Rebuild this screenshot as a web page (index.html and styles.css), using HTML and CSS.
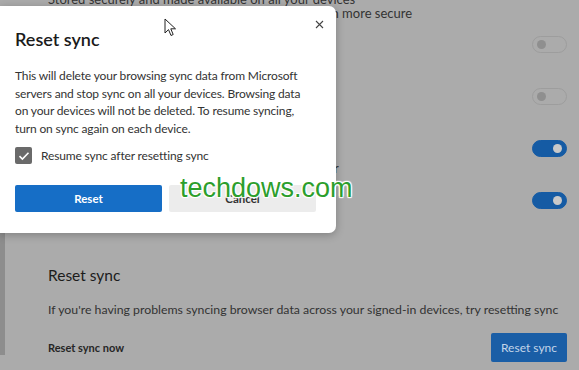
FILE: index.html
```html
<!DOCTYPE html>
<html lang="en">
<head>
    <meta charset="UTF-8">
    <meta name="viewport" content="width=device-width, initial-scale=1.0">
    <title>Reset sync</title>
    <link rel="stylesheet" href="styles.css">
</head>
<body>

<div class="settings">
    <div class="top-note">
        Stored securely and made available on all your devices<br>
        Sign in with your account to keep your history even more secure
    </div>

    <div class="toggle-row">
        <div class="row-text">Favorites</div>
        <span class="toggle"></span>
    </div>
    <div class="toggle-row">
        <div class="row-text">Settings</div>
        <span class="toggle"></span>
    </div>
    <div class="toggle-row">
        <div class="row-text shifted">Passwords
            <div class="row-sub">Sync passwords and card info saved in this browser</div>
        </div>
        <span class="toggle on"></span>
    </div>
    <div class="toggle-row">
        <div class="row-text">Open tabs</div>
        <span class="toggle on"></span>
    </div>

    <div class="card">
        <h2 class="card-title">Reset sync</h2>
        <p class="card-text">If you're having problems syncing browser data across your signed-in devices, try resetting sync</p>
        <div class="card-row">
            <span class="card-label">Reset sync now</span>
            <button class="outline-button">Reset sync</button>
        </div>
    </div>
</div>

<div class="dialog">
    <button class="close-button" aria-label="Close">
        <svg width="9" height="9" viewBox="0 0 9 9"><path d="M1 1L8 8M8 1L1 8" stroke="#444" stroke-width="1.1" fill="none"/></svg>
    </button>
    <h1 class="dialog-title">Reset sync</h1>
    <p class="dialog-text">This will delete your browsing sync data from Microsoft servers and stop sync on all your devices. Browsing data on your devices will not be deleted. To resume syncing, turn on sync again on each device.</p>
    <label class="check-row">
        <span class="checkbox">
            <svg width="12" height="10" viewBox="0 0 12 10"><path d="M1.5 5.2L4.4 8L10.5 1.8" stroke="#fff" stroke-width="1.6" fill="none"/></svg>
        </span>
        Resume sync after resetting sync
    </label>
    <div class="dialog-buttons">
        <button class="primary-button">Reset</button>
        <button class="secondary-button">Cancel</button>
    </div>
</div>

<svg class="cursor" width="13" height="19" viewBox="0 0 13 19">
    <path d="M1 1L1 15L4.5 11.6L7 17.5L9.2 16.5L6.8 10.8L11.5 10.8Z" fill="#fff" stroke="#222" stroke-width="1"/>
</svg>

<div class="watermark">techdows.com</div>

</body>
</html>
```

FILE: styles.css
```css
body {
    margin: 0;
    width: 579px;
    height: 370px;
    overflow: hidden;
    position: relative;
    background-color: #ababab;
    font-family: 'Lato', 'Noto Sans', sans-serif;
    color: #2a2a2a;
}
.settings {
    padding: 0 12px 0 0;
}
.top-note {
    margin-top: -8px;
    margin-bottom: -2px;
    padding-left: 48px;
    font-size: 13px;
    line-height: 14px;
    color: #333;
}
.toggle-row {
    height: 52px;
    display: flex;
    justify-content: space-between;
    align-items: center;
    padding-left: 48px;
    font-size: 13px;
    color: #333;
}
.row-text.shifted {
    margin-top: 23px;
}
.row-sub {
    margin-top: 2px;
    line-height: 17px;
}
.toggle {
    width: 33px;
    height: 15px;
    border: 1px solid #9d9d9d;
    border-radius: 9px;
    position: relative;
    flex-shrink: 0;
}
.toggle::after {
    content: '';
    position: absolute;
    left: 4px;
    top: 3px;
    width: 9px;
    height: 9px;
    border-radius: 50%;
    background-color: #8f8f8f;
}
.toggle.on {
    background-color: #155ba4;
    border-color: #155ba4;
}
.toggle.on::after {
    left: auto;
    right: 4px;
    background-color: #c9c9c9;
}
.card {
    margin-top: 7px;
    height: 122px;
    border-left: 5px solid #8d8d8d;
    padding-left: 43px;
}
.card-title {
    margin: 0;
    padding-top: 30px;
    font-size: 15.5px;
    font-weight: 400;
    line-height: 24px;
    color: #1c1c1c;
}
.card-text {
    margin: 14px 0 0;
    font-size: 12.3px;
    line-height: 18px;
    color: #333;
    white-space: nowrap;
}
.card-row {
    margin-top: 14px;
    display: flex;
    justify-content: space-between;
    align-items: center;
}
.card-label {
    font-size: 11px;
    font-weight: 700;
    color: #262626;
}
.outline-button {
    width: 76px;
    height: 29px;
    border: none;
    border-radius: 2px;
    background-color: #1a5ea6;
    color: #c3d5e9;
    font-family: inherit;
    font-size: 12px;
    padding: 0;
}
.dialog {
    position: absolute;
    left: 0;
    top: 6px;
    width: 336px;
    height: 227px;
    box-sizing: border-box;
    padding: 0 20px 0 15px;
    background-color: #fff;
    border-radius: 0 7px 7px 0;
    box-shadow: 0 2px 8px rgba(0, 0, 0, 0.25);
}
.close-button {
    position: absolute;
    right: 11px;
    top: 11px;
    width: 11px;
    height: 11px;
    padding: 0;
    border: none;
    background: none;
}
.dialog-title {
    margin: 0;
    padding-top: 20px;
    font-size: 18px;
    font-weight: 600;
    line-height: 26px;
    color: #1b1b1b;
}
.dialog-text {
    margin: 15px 0 0;
    font-size: 12px;
    letter-spacing: -0.15px;
    line-height: 17.6px;
    color: #333;
}
.check-row {
    margin-top: 10px;
    display: flex;
    align-items: center;
    gap: 9px;
    font-size: 12px;
    letter-spacing: -0.15px;
    color: #333;
}
.checkbox {
    width: 17px;
    height: 17px;
    border-radius: 2px;
    background-color: #6a6a6a;
    display: flex;
    justify-content: center;
    align-items: center;
}
.dialog-buttons {
    margin-top: 21px;
    display: flex;
    gap: 7px;
}
.primary-button,
.secondary-button {
    width: 147px;
    height: 27px;
    border: none;
    border-radius: 2px;
    font-family: inherit;
    font-size: 11.5px;
    font-weight: 700;
    padding: 0;
}
.primary-button {
    background-color: #166ec6;
    color: #fff;
}
.secondary-button {
    background-color: #ececec;
    color: #333;
}
.cursor {
    position: absolute;
    left: 164px;
    top: 18px;
}
.watermark {
    position: absolute;
    left: 180px;
    top: 171px;
    font-family: 'Liberation Sans', Arial, sans-serif;
    font-size: 27px;
    line-height: 34px;
    color: #2c9e2c;
    text-shadow: 0 0 2px #fff, 0 0 2px #fff, 1px 1px 1px #fff, -1px -1px 1px #fff, 1px -1px 1px #fff, -1px 1px 1px #fff;
}
```
